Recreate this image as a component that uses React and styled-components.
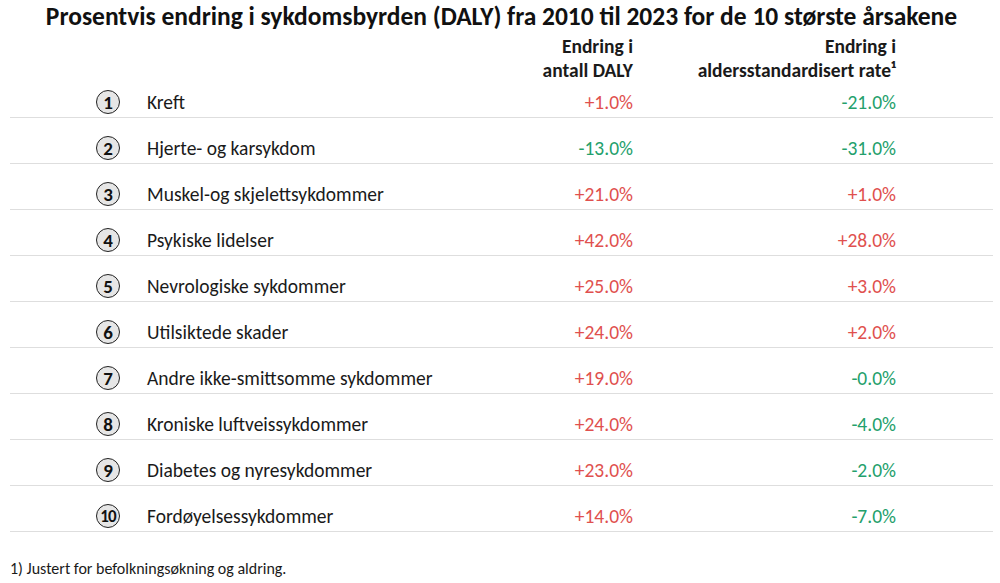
import styled, { createGlobalStyle } from 'styled-components'

const rows = [
    ['Kreft', 1.0, -21.0],
    ['Hjerte- og karsykdom', -13.0, -31.0],
    ['Muskel-og skjelettsykdommer', 21.0, 1.0],
    ['Psykiske lidelser', 42.0, 28.0],
    ['Nevrologiske sykdommer', 25.0, 3.0],
    ['Utilsiktede skader', 24.0, 2.0],
    ['Andre ikke-smittsomme sykdommer', 19.0, -0.0],
    ['Kroniske luftveissykdommer', 24.0, -4.0],
    ['Diabetes og nyresykdommer', 23.0, -2.0],
    ['Fordøyelsessykdommer', 14.0, -7.0],
]

const GlobalStyle = createGlobalStyle`
    body {
        margin: 0;
        background: #fff;
        font-family: Carlito, Calibri, 'Liberation Sans', sans-serif;
        color: #1a1a1a;
    }
`

const Page = styled.div`
    width: 1000px;
    height: 583px;
    padding: 0 7px 0 10px;
    box-sizing: border-box;
    display: flex;
    flex-direction: column;
`

const Title = styled.h1`
    margin: 0;
    font-size: 25.5px;
    line-height: 34px;
    font-weight: 700;
    text-align: center;
    color: #111;
`

const Columns = styled.div`
    display: grid;
    grid-template-columns: 137px 1fr 200px 263px 97px;
    align-items: center;
`

const Header = styled(Columns)`
    height: 47px;
    align-items: start;
`

const HeadCell = styled.div`
    grid-column: ${(p) => p.col};
    text-align: right;
    font-size: 19.5px;
    font-weight: 700;
    line-height: 24px;
    color: #1a1a1a;
`

const List = styled.div`
    display: flex;
    flex-direction: column;
    gap: 18px;
    margin-top: 9px;
`

const Row = styled(Columns)`
    height: 24px;
    padding-bottom: 3px;
    border-bottom: 1.5px solid #dedede;
`

const BadgeCell = styled.div`
    display: flex;
    justify-content: flex-end;
    padding-right: 27px;
`

const Badge = styled.div`
    width: 22px;
    height: 22px;
    flex: none;
    border-radius: 50%;
    border: 1.5px solid #222;
    background: #e6e6e6;
    display: flex;
    align-items: center;
    justify-content: center;
    font-size: ${(p) => (p.small ? '17px' : '19px')};
    font-weight: 700;
    letter-spacing: ${(p) => (p.small ? '-0.8px' : '0')};
    color: #111;
`

const Label = styled.div`
    font-size: 19.5px;
    color: #1a1a1a;
    white-space: nowrap;
`

const Value = styled.div`
    text-align: right;
    font-size: 19.5px;
    color: ${(p) => (p.up ? '#e0504e' : '#23a06c')};
`

const Footnote = styled.div`
    margin-top: 27px;
    font-size: 16px;
    color: #1a1a1a;
`

const isUp = (v) => !(v < 0 || Object.is(v, -0))

const fmt = (v) => `${isUp(v) ? '+' : '-'}${Math.abs(v).toFixed(1)}%`

const App = () => {
    return (
        <>
            <GlobalStyle />
            <Page>
                <Title>
                    Prosentvis endring i sykdomsbyrden (DALY) fra 2010 til 2023 for de 10 største årsakene
                </Title>
                <Header>
                    <HeadCell col={3}>
                        Endring i
                        <br />
                        antall DALY
                    </HeadCell>
                    <HeadCell col={4}>
                        Endring i
                        <br />
                        aldersstandardisert rate¹
                    </HeadCell>
                </Header>
                <List>
                    {rows.map(([name, total, rate], i) => (
                        <Row key={name}>
                            <BadgeCell>
                                <Badge small={i === 9}>{i + 1}</Badge>
                            </BadgeCell>
                            <Label>{name}</Label>
                            <Value up={isUp(total)}>{fmt(total)}</Value>
                            <Value up={isUp(rate)}>{fmt(rate)}</Value>
                            <div />
                        </Row>
                    ))}
                </List>
                <Footnote>1) Justert for befolkningsøkning og aldring.</Footnote>
            </Page>
        </>
    )
}

export default App
